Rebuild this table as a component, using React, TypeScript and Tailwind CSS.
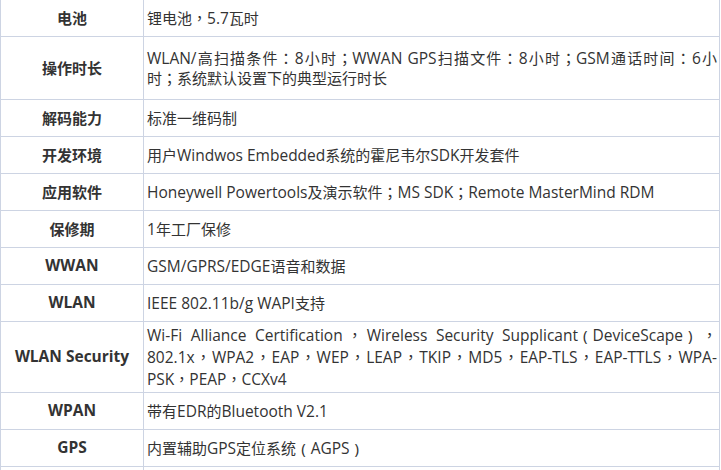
import React from "react";

type Row = { label: string; h: string; lh: string; lines: string[] };

const rows: Row[] = [
  { label: "电池", h: "h-[37px]", lh: "leading-[22px]", lines: ["锂电池，5.7瓦时"] },
  {
    label: "操作时长",
    h: "h-[63px]",
    lh: "leading-[20px]",
    lines: [
      "WLAN/高扫描条件：8小时；WWAN GPS扫描文件：8小时；GSM通话时间：6小",
      "时；系统默认设置下的典型运行时长",
    ],
  },
  { label: "解码能力", h: "h-[37px]", lh: "leading-[22px]", lines: ["标准一维码制"] },
  { label: "开发环境", h: "h-[37px]", lh: "leading-[22px]", lines: ["用户Windwos Embedded系统的霍尼韦尔SDK开发套件"] },
  {
    label: "应用软件",
    h: "h-[37px]",
    lh: "leading-[22px]",
    lines: ["Honeywell Powertools及演示软件；MS SDK；Remote MasterMind RDM"],
  },
  { label: "保修期", h: "h-[37px]", lh: "leading-[22px]", lines: ["1年工厂保修"] },
  { label: "WWAN", h: "h-[37px]", lh: "leading-[22px]", lines: ["GSM/GPRS/EDGE语音和数据"] },
  { label: "WLAN", h: "h-[37px]", lh: "leading-[22px]", lines: ["IEEE 802.11b/g WAPI支持"] },
  {
    label: "WLAN Security",
    h: "h-[71px]",
    lh: "leading-[22px]",
    lines: [
      "Wi-Fi Alliance Certification，Wireless Security Supplicant（DeviceScape），",
      "802.1x，WPA2，EAP，WEP，LEAP，TKIP，MD5，EAP-TLS，EAP-TTLS，WPA-",
      "PSK，PEAP，CCXv4",
    ],
  },
  { label: "WPAN", h: "h-[37px]", lh: "leading-[22px]", lines: ["带有EDR的Bluetooth V2.1"] },
  { label: "GPS", h: "h-[37px]", lh: "leading-[22px]", lines: ["内置辅助GPS定位系统（AGPS）"] },
  { label: "", h: "h-[37px]", lh: "leading-[22px]", lines: [""] },
];

type Kind = "cjk" | "latin" | "punct" | "paren";

function kindOf(ch: string): Kind {
  if (ch === "，" || ch === "：" || ch === "；") return "punct";
  if (ch === "（" || ch === "）") return "paren";
  if (/[\u3000-\u9fff]/.test(ch)) return "cjk";
  return "latin";
}

function Text({ s }: { s: string }) {
  const runs: { k: Kind; t: string }[] = [];
  for (const ch of s) {
    const k = kindOf(ch);
    const last = runs[runs.length - 1];
    if (last && last.k === k && (k === "cjk" || k === "latin")) last.t += ch;
    else runs.push({ k, t: ch });
  }
  return (
    <>
      {runs.map((r, i) => {
        if (r.k === "latin")
          return (
            <span key={i} className="text-[15.5px]">
              {r.t}
            </span>
          );
        if (r.k === "punct")
          return (
            <span key={i} className="font-['Noto_Sans_CJK_TC',sans-serif]">
              {r.t}
            </span>
          );
        if (r.k === "paren")
          return (
            <span key={i} className="px-[5px] font-['Noto_Sans',sans-serif] text-[15px]">
              {r.t === "（" ? "(" : ")"}
            </span>
          );
        return <span key={i}>{r.t}</span>;
      })}
    </>
  );
}

export default function App() {
  return (
    <div className="w-[721px] h-[470px] overflow-hidden bg-white font-['Open_Sans','Noto_Sans_CJK_SC',sans-serif] [text-spacing-trim:space-all]">
      <div className="w-[720px] border-l border-r border-[#cdd4e3] box-border text-[15px] text-[#333333]">
        {rows.map((r, i) => (
          <div key={i} className={"flex border-b border-[#cdd4e3] " + r.h}>
            <div className="w-[143px] shrink-0 border-r border-[#cdd4e3] flex items-center justify-center font-bold">
              <Text s={r.label} />
            </div>
            <div className="flex-1 min-w-0 flex flex-col justify-center pl-[3px] pr-[2px]">
              {r.lines.map((l, j) => (
                <div
                  key={j}
                  className={
                    "whitespace-nowrap " +
                    r.lh +
                    (j < r.lines.length - 1 ? " text-justify [text-align-last:justify]" : "")
                  }
                >
                  <Text s={l} />
                </div>
              ))}
            </div>
          </div>
        ))}
      </div>
    </div>
  );
}
